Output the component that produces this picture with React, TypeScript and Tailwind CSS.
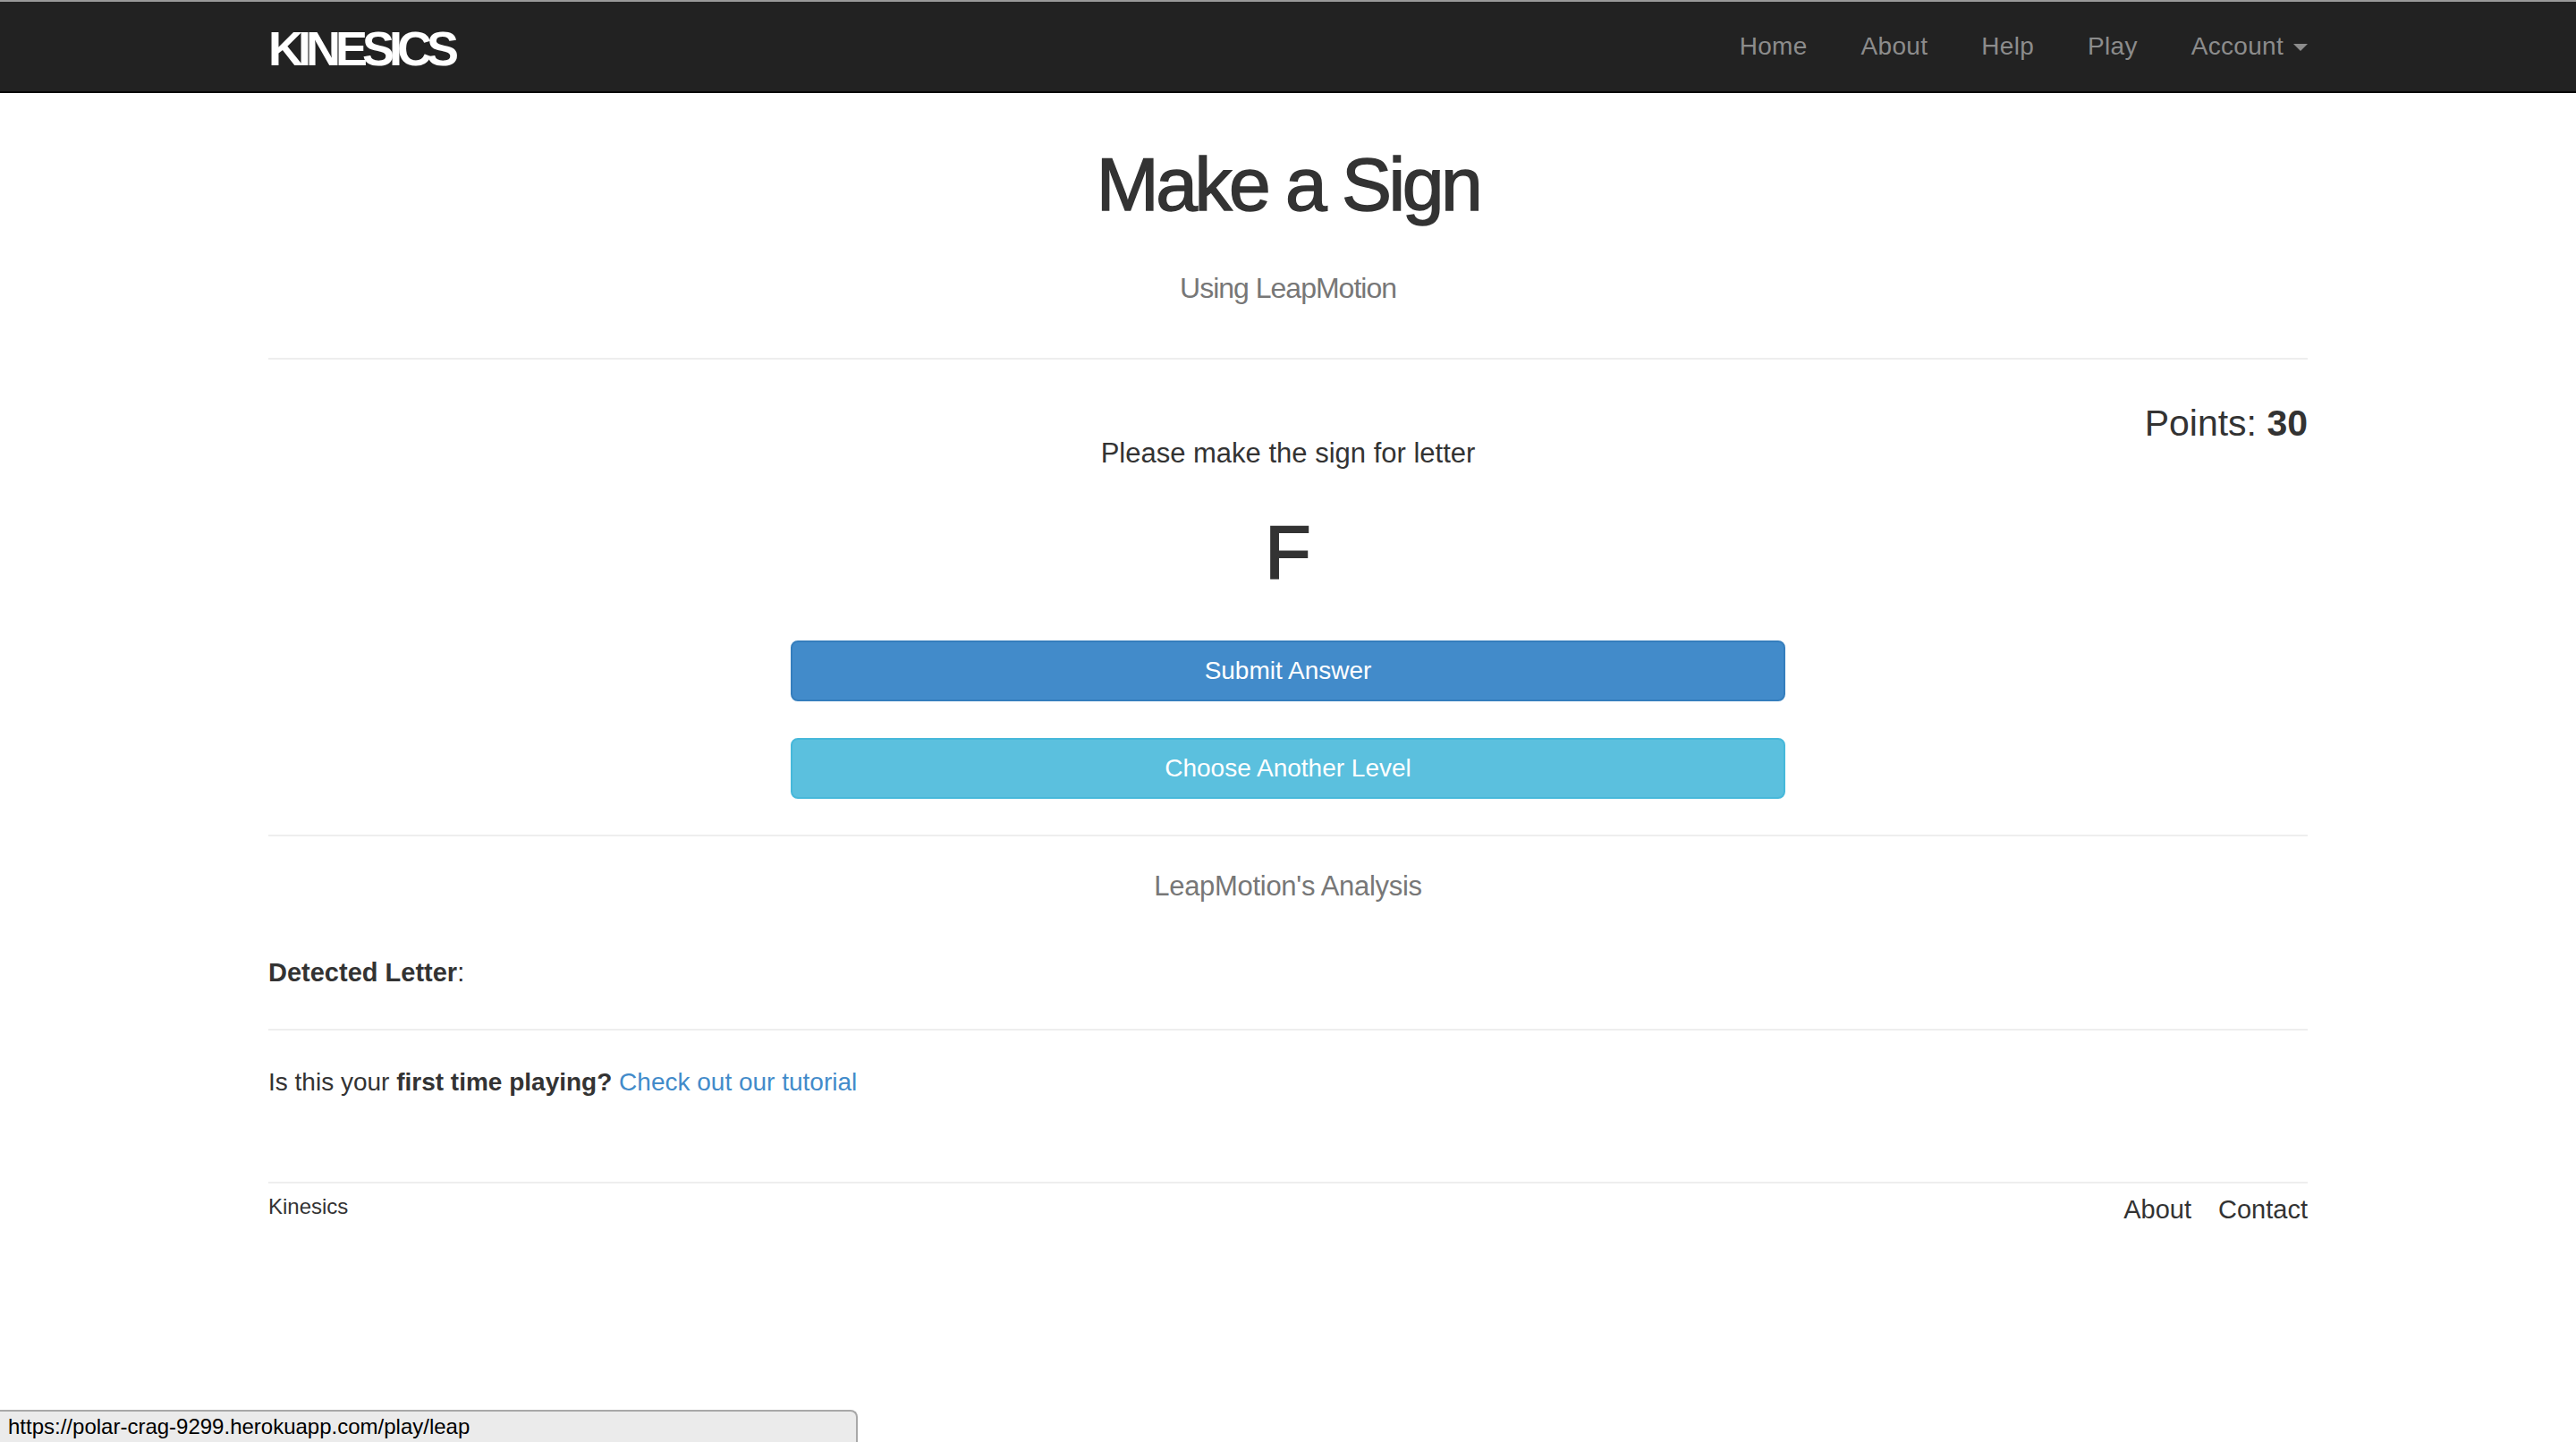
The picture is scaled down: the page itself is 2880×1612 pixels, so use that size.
/**
 * Kinesics — "Make a Sign" play screen (LeapMotion mode).
 * Bootstrap-style page drawn at 2x: navbar, prompt letter, two full-width
 * buttons, analysis block, tutorial hint and footer.
 */

const NAV_LINKS = ['Home', 'About', 'Help', 'Play']

function Navbar() {
  return (
    <nav className="h-[104px] border-t-2 border-b-2 border-t-[#9a9a9a] border-b-[#080808] bg-[#222222]">
      <div className="mx-auto flex h-full w-[2280px] items-center justify-between">
        <a className="mt-[4px] text-[54px] font-bold leading-none tracking-[-6px] text-white">KINESICS</a>
        <ul className="-mr-[30px] flex h-full items-center text-[28px] tracking-[0.3px] text-[#8c8c8c]">
          {NAV_LINKS.map((label) => (
            <li key={label} className="px-[30px]">
              {label}
            </li>
          ))}
          <li className="flex items-center px-[30px]">
            Account
            <span className="ml-[11px] mt-[2px] h-0 w-0 border-x-[8px] border-t-[8px] border-x-transparent border-t-[#8c8c8c]" />
          </li>
        </ul>
      </div>
    </nav>
  )
}

function Hr({ className = '' }: { className?: string }) {
  return <div className={`h-[2px] bg-[#eeeeee] ${className}`} />
}

export default function App() {
  return (
    <div className="relative min-h-screen bg-white font-['Liberation_Sans',Arial,sans-serif] text-[#333333]">
      <Navbar />

      <main className="mx-auto w-[2280px]">
        {/* header */}
        <h1 className="mt-[56px] text-center text-[84px] leading-[92px] tracking-[-3.5px] [-webkit-text-stroke:1.5px_#333333]">
          Make a Sign
        </h1>
        <p className="mt-[48px] text-center text-[32px] leading-[44px] tracking-[-1px] text-[#777777]">
          Using LeapMotion
        </p>
        <Hr className="mt-[56px]" />

        {/* prompt */}
        <div className="grid grid-cols-[1fr_auto_1fr]">
          <div />
          <div className="mt-[83px] flex flex-col items-center">
            <p className="text-[31px] leading-[44px]">Please make the sign for letter</p>
            <p className="mt-[42px] text-[84px] leading-[92px] [-webkit-text-stroke:2px_#333333]">F</p>
          </div>
          <div className="mt-[43px] justify-self-end text-[41px] leading-[56px]">
            Points: <strong className="font-bold">30</strong>
          </div>
        </div>

        <div className="mt-[53px] flex flex-col items-center gap-[41px]">
          <button className="h-[68px] w-[1112px] rounded-[8px] border-2 border-[#357ebd] bg-[#428bca] text-[28px] text-white">
            Submit Answer
          </button>
          <button className="h-[68px] w-[1112px] rounded-[8px] border-2 border-[#46b8da] bg-[#5bc0de] text-[28px] text-white">
            Choose Another Level
          </button>
        </div>
        <Hr className="mt-[40px]" />

        {/* analysis */}
        <h4 className="mt-[36px] text-center text-[31px] leading-[40px] tracking-[-0.3px] text-[#777777]">
          LeapMotion&apos;s Analysis
        </h4>
        <p className="mt-[56px] text-[29px] leading-[40px]">
          <strong className="font-bold">Detected Letter</strong>:
        </p>
        <Hr className="mt-[43px]" />

        <p className="mt-[38px] text-[28px] leading-[40px]">
          Is this your <strong className="font-bold">first time playing?</strong>{' '}
          <a className="text-[#428bca]">Check out our tutorial</a>
        </p>

        {/* footer */}
        <footer className="mt-[91px]">
          <Hr />
          <div className="mt-[9px] flex items-start justify-between">
            <span className="text-[24px] leading-[34px]">Kinesics</span>
            <div className="flex gap-[30px] text-[29px] leading-[40px]">
              <a>About</a>
              <a>Contact</a>
            </div>
          </div>
        </footer>
      </main>

      {/* browser status bubble */}
      <div className="fixed bottom-0 left-0 flex h-[36px] w-[959px] items-center rounded-tr-[8px] border-t-2 border-r-2 border-[#a8a8a8] bg-[#ebebeb] pl-[9px] text-[24px] text-black">
        https://polar-crag-9299.herokuapp.com/play/leap
      </div>
    </div>
  )
}
